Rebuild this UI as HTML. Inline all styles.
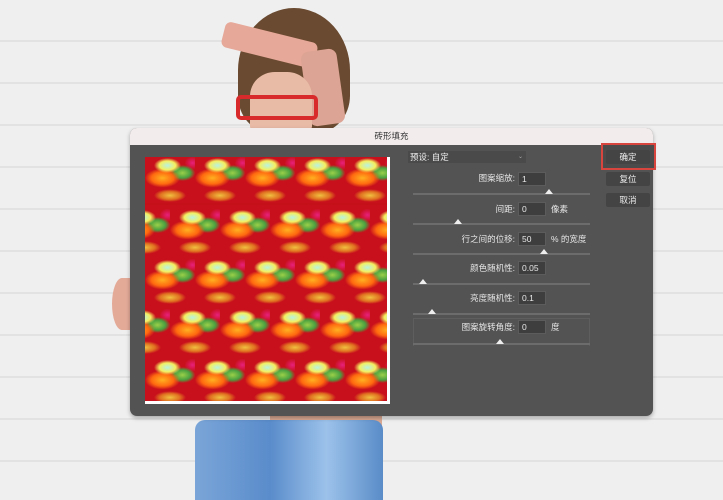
<!DOCTYPE html>
<html><head><meta charset="utf-8"><style>
*{margin:0;padding:0;box-sizing:border-box}
body{width:723px;height:500px;overflow:hidden;position:relative;font-family:"Liberation Sans","Noto Sans CJK SC",sans-serif;
background:#ececec;
background-image:repeating-linear-gradient(180deg,#efefef 0 40px,#e2e2e2 40px 42px);}
.a{position:absolute}
.lbl{position:absolute;color:#e6e6e6;font-size:8.5px;text-align:right;width:110px;line-height:12px}
.inp{position:absolute;left:518px;width:28px;height:14px;background:#3e3e3e;border:1px solid #5c5c5c;color:#e8e8e8;font-size:8.5px;padding-left:3px;line-height:12px}
.unit{position:absolute;left:551px;color:#e6e6e6;font-size:8.5px;line-height:12px}
.sl{position:absolute;left:413px;width:177px;height:2px;background:#6c6c6c}
.th{position:absolute;width:0;height:0;border-left:4px solid transparent;border-right:4px solid transparent;border-bottom:5px solid #eee}
.btn{position:absolute;left:606px;width:44px;height:14px;background:#444;color:#eee;font-size:8.5px;text-align:center;line-height:14px;border-radius:2px}
.pat{position:absolute;left:145px;top:157px;width:242px;height:244px;overflow:hidden;background:#c5101a}
.row{position:absolute;left:0;width:242px;height:50px;
background:
radial-gradient(ellipse 18px 10px at 45% 25%,#b8f2e0 0,#f4f060 45%,transparent 75%),
radial-gradient(ellipse 22px 12px at 35% 50%,#ffb020 0,#ff6a10 50%,transparent 80%),
radial-gradient(ellipse 16px 10px at 75% 40%,#9ad048 0,#4aa040 50%,transparent 80%),
radial-gradient(ellipse 20px 8px at 50% 85%,#f0c040 0,#e07020 50%,transparent 80%),
radial-gradient(ellipse 10px 8px at 95% 20%,#e8207a,transparent 80%),
#c8101c;
background-size:50px 50px}
</style></head><body>
<!-- person -->
<div class="a" style="left:238px;top:8px;width:112px;height:125px;border-radius:50% 50% 30% 30%;background:#6a4a30"></div>
<div class="a" style="left:222px;top:32px;width:95px;height:26px;background:#e6a898;transform:rotate(14deg);border-radius:6px"></div>
<div class="a" style="left:305px;top:50px;width:36px;height:75px;background:#dca494;transform:rotate(-8deg);border-radius:8px"></div>
<div class="a" style="left:250px;top:72px;width:62px;height:60px;border-radius:40% 40% 10% 10%;background:#e8bba6"></div>
<div class="a" style="left:236px;top:95px;width:82px;height:25px;border:4px solid #d82a2a;border-radius:5px"></div>
<div class="a" style="left:112px;top:278px;width:20px;height:52px;border-radius:50% 0 0 50%;background:#e4aa98"></div>
<div class="a" style="left:270px;top:412px;width:112px;height:30px;background:#d9a893"></div>
<div class="a" style="left:195px;top:420px;width:188px;height:80px;background:linear-gradient(90deg,#7aa5d8,#5a8ccb 40%,#9cc2ea 70%,#5a8cc8);border-radius:10px 10px 0 0"></div>
<!-- dialog -->
<div class="a" style="left:130px;top:128px;width:523px;height:288px;background:#535353;border-radius:7px;overflow:hidden;box-shadow:0 2px 4px rgba(0,0,0,.3)">
<div style="height:17px;background:#f2ecec;color:#333;font-size:8.5px;text-align:center;line-height:17px">砖形填充</div>
</div>
<div class="a" style="left:145px;top:157px;width:245px;height:247px;background:#fff"></div>
<div class="pat">
<div class="row" style="top:0;height:46px;background-position:0 -4px"></div>
<div class="row" style="top:48px;background-position:25px 0"></div>
<div class="row" style="top:98px;background-position:0 0"></div>
<div class="row" style="top:148px;background-position:25px 0"></div>
<div class="row" style="top:198px;background-position:0 0;height:46px"></div>
</div>
<!-- controls -->
<div class="a" style="left:408px;top:151px;width:118px;height:12px;background:#4a4a4a;color:#eee;font-size:8.5px;line-height:12px;padding-left:2px">预设: 自定<span style="position:absolute;right:3px;font-size:6px;color:#aaa">⌄</span></div>
<div class="lbl" style="left:405px;top:172px">图案缩放:</div><div class="inp" style="top:172px">1</div>
<div class="sl" style="top:193px"></div><div class="th" style="left:545px;top:189px"></div>
<div class="lbl" style="left:405px;top:203px">间距:</div><div class="inp" style="top:202px">0</div><div class="unit" style="top:203px">像素</div>
<div class="sl" style="top:223px"></div><div class="th" style="left:454px;top:219px"></div>
<div class="lbl" style="left:405px;top:233px">行之间的位移:</div><div class="inp" style="top:232px">50</div><div class="unit" style="top:233px">% 的宽度</div>
<div class="sl" style="top:253px"></div><div class="th" style="left:540px;top:249px"></div>
<div class="lbl" style="left:405px;top:262px">颜色随机性:</div><div class="inp" style="top:261px">0.05</div>
<div class="sl" style="top:283px"></div><div class="th" style="left:419px;top:279px"></div>
<div class="lbl" style="left:405px;top:292px">亮度随机性:</div><div class="inp" style="top:291px">0.1</div>
<div class="sl" style="top:313px"></div><div class="th" style="left:428px;top:309px"></div>
<div class="a" style="left:413px;top:318px;width:177px;height:28px;border:1px solid #5e5e5e;border-bottom:none"></div>
<div class="lbl" style="left:405px;top:321px">图案旋转角度:</div><div class="inp" style="top:320px">0</div><div class="unit" style="top:321px">度</div>
<div class="sl" style="top:343px"></div><div class="th" style="left:496px;top:339px"></div>
<div class="a" style="left:601px;top:143px;width:55px;height:27px;border:2px solid #d8443e;background:#4b4b4b"></div>
<div class="btn" style="top:150px">确定</div>
<div class="btn" style="top:172px">复位</div>
<div class="btn" style="top:193px">取消</div>
</body></html>
